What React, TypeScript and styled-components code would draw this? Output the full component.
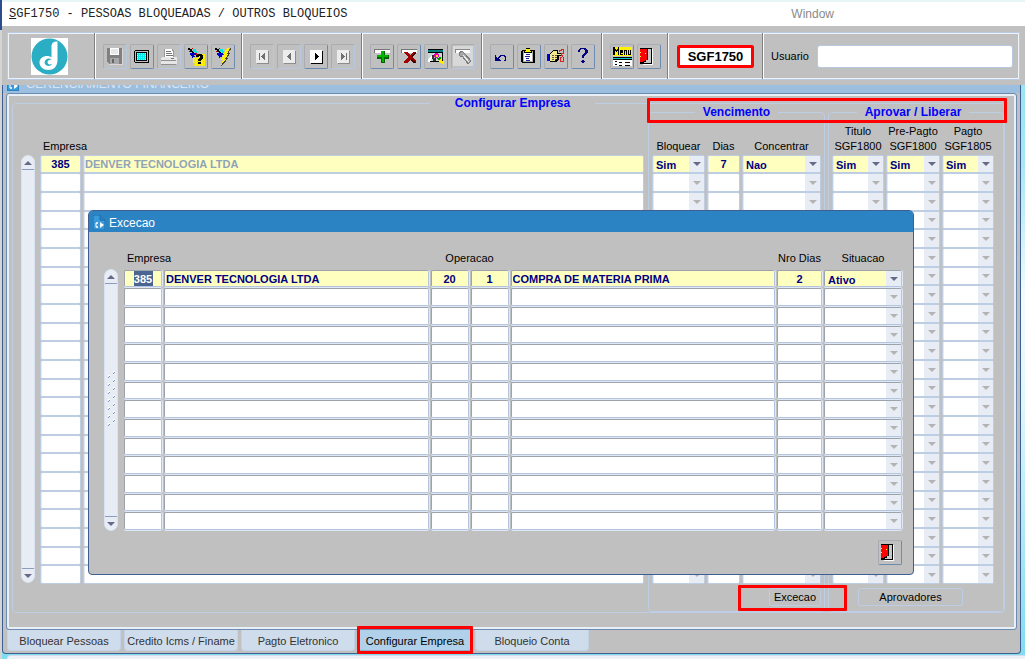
import React, { useState } from "react";
import styled, { createGlobalStyle, css } from "styled-components";

const GlobalStyle = createGlobalStyle`
  * { box-sizing: border-box; }
  html, body { margin: 0; padding: 0; }
  body {
    font-family: "Liberation Sans", Arial, sans-serif;
    font-size: 11px;
    color: #000;
    background: #a9e6f0;
  }
  button, input, select { font: inherit; color: inherit; margin: 0; padding: 0; }
`;

const gray = "#c0c0c0";
const lineBlue = "#bccde4";
const navy = "#000080";
const yellow = "#ffffc0";
const red = "#ff0000";

/* ---------- frame ---------- */

const Page = styled.div`
  display: flex;
  flex-direction: column;
  min-height: 100vh;
  overflow: hidden;
  background:
    linear-gradient(180deg, #2a4d8f 0 30px, #d4d4d4 30px) 0 0 / 2px 100% no-repeat,
    linear-gradient(180deg, #8fe0f0 0%, #a6e8f2 25%, #f2fbfd 45%, #e2f8fb 60%, #7fdcee 100%);
`;

const MenuBar = styled.header`
  display: flex;
  align-items: center;
  justify-content: space-between;
  height: 26px;
  margin-left: 2px;
  padding: 0 191px 0 7px;
  border-top: 2px solid #e6f6f6;
  background: #fff;
`;

const ProgramTitle = styled.h1`
  margin: 0;
  font: 12px/14px "Liberation Mono", "Courier New", monospace;
  color: #222;
  &::first-letter { text-decoration: underline; }
`;

const MenuLink = styled.a`
  font-size: 12px;
  line-height: 14px;
  color: #8a8a8a;
  text-decoration: none;
`;

const ToolbarArea = styled.div`
  padding: 6px 5px 5px;
  margin-left: 2px;
  background: ${gray};
`;

const Toolbar = styled.div`
  display: flex;
  height: 48px;
  border: 1px solid #b9cbe4;
  box-shadow: inset 0 0 0 1px #eef3fa;
`;

const Group = styled.div<{ $last?: boolean }>`
  display: flex;
  align-items: center;
  gap: 3px;
  padding: 0 6px 0 7px;
  ${(p) => (p.$last ? "flex: 1; gap: 8px;" : "border-right: 1px solid #808080;")}
  border-left: 1px solid #fff;
`;

const LogoCell = styled(Group)`
  width: 87px;
  justify-content: center;
  padding: 0 4px 0 0;
  border-left: 0;
`;

const ToolButton = styled.button`
  display: flex;
  width: 24px;
  height: 25px;
  background: ${gray};
  border: 1px solid;
  border-color: #a9adb3 #6d8bb1 #6d8bb1 #a9adb3;
  border-radius: 2px;
  &:disabled { border-color: #aaacb0 #b7c8e0 #b7c8e0 #aaacb0; }
`;

const ProgramCode = styled.output`
  width: 77px;
  margin: 0 2px 0 1px;
  padding: 0;
  border: 3px solid ${red};
  border-radius: 2px;
  background: #fff;
  font-size: 13px;
  font-weight: bold;
  line-height: 17px;
  text-align: center;
`;

const UserInput = styled.input`
  flex: 1;
  min-width: 0;
  height: 23px;
  background: #fff;
  border: 1px solid #b7c8e0;
  border-radius: 3px;
`;

/* ---------- windows ---------- */

const MainWindow = styled.main`
  position: relative;
  margin: 0 4px 0 2px;
  padding: 0 3px 2px;
  background: ${gray};
  border: solid #3f5f92;
  border-width: 0 1px 1px;
  border-radius: 0 0 4px 4px;
`;

const ClippedTitle = styled.div`
  display: flex;
  align-items: flex-end;
  gap: 7px;
  height: 8px;
  margin: 0 -3px;
  padding: 0 4px 2px;
  overflow: hidden;
  background: #9cbfdf;
  color: #d7e5f3;
  font-size: 12px;
  line-height: 14px;
`;

const TabPanel = styled.section`
  padding: 5px 11px 16px 5px;
  border: 1px solid #6d8bb1;
  border-radius: 3px;
  box-shadow: inset 0 0 0 2px #e9eff7;
`;

const groupBox = css`
  min-width: 0;
  margin: 0;
  border: 1px solid ${lineBlue};
  border-radius: 4px;
`;

const Legend = styled.legend<{ $gap: number }>`
  margin: 0 auto;
  padding: 0 ${(p) => p.$gap}px;
  font-size: 12px;
  font-weight: bold;
  line-height: 8px;
  color: #0000ff;
`;

const OuterGroup = styled.fieldset`
  ${groupBox}
  padding: 1px 0 0 8px;
`;

const SubGroup = styled.fieldset<{ $w: number; $right: number }>`
  ${groupBox}
  flex: none;
  width: ${(p) => p.$w}px;
  padding: 0 ${(p) => p.$right}px 5px 2px;
  margin-left: 3px;
`;

const Body = styled.div`
  display: flex;
  width: 100%;
`;

const CompanyArea = styled.div`
  display: flex;
  flex: 1;
  gap: 4px;
  min-width: 0;
  padding-top: 8px;
  align-items: flex-start;
`;

const BarColumn = styled.div<{ $top: number }>`
  display: flex;
  flex: none;
  padding-top: ${(p) => p.$top}px;
`;

const Bar = styled.div<{ $h: number }>`
  display: flex;
  flex-direction: column;
  justify-content: space-between;
  width: 14px;
  height: ${(p) => p.$h}px;
  background: #e8edf5;
  border: 1px solid #d9e2ef;
  border-radius: 7px;
`;

const BarButton = styled.button<{ $down?: boolean }>`
  display: flex;
  align-items: center;
  justify-content: center;
  height: 14px;
  background: transparent;
  border: 0 solid #8b9dbb;
  border-width: ${(p) => (p.$down ? "1px 0 0" : "0 0 1px")};
`;

/* ---------- grids ---------- */

const Grid = styled.table<{ $head: number; $lift?: number }>`
  width: 100%;
  table-layout: fixed;
  border-collapse: separate;
  border-spacing: 0;
  thead tr { height: ${(p) => p.$head}px; }
  th { padding-bottom: ${(p) => p.$lift ?? 1}px; }
  tbody tr { height: 19px; }
  tbody tr:nth-child(3n + 1) { height: 18px; }
`;

const Th = styled.th<{ $left?: boolean }>`
  padding: 0 ${(p) => (p.$left ? 4 : 0)}px;
  font-weight: normal;
  line-height: 15px;
  vertical-align: bottom;
  white-space: nowrap;
  text-align: ${(p) => (p.$left ? "left" : "center")};
`;

const Td = styled.td`
  height: inherit;
  padding: 0 1px;
  vertical-align: top;
`;

type Look = { $active?: boolean; $dialog?: boolean; $muted?: boolean; $center?: boolean };

const box = css<Look>`
  width: 100%;
  height: 100%;
  background: ${(p) => (p.$active ? yellow : "#fff")};
  border: 1px solid ${lineBlue};
  border-radius: 2px;
  ${(p) =>
    p.$dialog
      ? "border-color: #9ea3ab #b4c6df #b4c6df #9ea3ab; box-shadow: 0 1px 0 #dfe8f4, 1px 0 0 #dfe8f4; height: calc(100% - 1px);"
      : "box-shadow: inset 1px 0 0 #e3eaf4;"}
  color: ${(p) => (p.$muted ? "#8fa3b8" : navy)};
  font-weight: bold;
`;

const Field = styled.input<Look>`
  ${box}
  display: block;
  padding: 0 1px;
  text-align: ${(p) => (p.$center ? "center" : "left")};
`;

const FieldFrame = styled.div<Look>`
  ${box}
  display: flex;
  align-items: center;
  justify-content: center;
`;

const SelectedField = styled.input`
  width: 19px;
  height: 15px;
  border: 0;
  background: #4a6591;
  color: #fff;
  font-weight: bold;
  text-align: center;
`;

const ComboFrame = styled.div<Look>`
  ${box}
  display: flex;
`;

const ComboSelect = styled.select`
  flex: 1;
  min-width: 0;
  height: 100%;
  padding: 2px 0 0 3px;
  appearance: none;
  background: transparent;
  border: 0;
  font-weight: bold;
`;

const ComboArrow = styled.span`
  display: flex;
  flex: none;
  align-items: center;
  justify-content: center;
  width: 15px;
  background: #e8edf5;
`;

/* ---------- buttons, tabs, highlights ---------- */

const ButtonRow = styled.div<{ $left: number }>`
  display: flex;
  padding: 4px 0 0 ${(p) => p.$left}px;
`;

const TextButton = styled.button<{ $w: number }>`
  width: ${(p) => p.$w}px;
  height: 18px;
  background: ${gray};
  border: 1px solid ${lineBlue};
  border-radius: 2px;
`;

const Highlight = styled.span`
  position: absolute;
  border: 3px solid ${red};
  border-radius: 1px;
  pointer-events: none;
`;

const HeadHighlight = styled(Highlight)`
  top: 13px;
  right: 13px;
  width: 360px;
  height: 25px;
`;

const ButtonHighlight = styled(Highlight)`
  bottom: 42px;
  right: 173px;
  width: 109px;
  height: 26px;
`;

const Tabs = styled.nav`
  display: flex;
  gap: 3px;
  padding-left: 1px;
`;

const Tab = styled.button<{ $active?: boolean }>`
  position: relative;
  width: 114px;
  height: 21px;
  padding-top: 1px;
  white-space: nowrap;
  background: ${(p) => (p.$active ? "#b1d0ea" : "#cfdcec")};
  color: ${(p) => (p.$active ? "#000" : "#333")};
  border: 1px solid ${(p) => (p.$active ? "#8fa9cb" : "#c3d2e6")};
  border-top: 0;
  border-radius: 0 0 4px 4px;
`;

const TabHighlight = styled(Highlight)`
  inset: -4px -2px -4px -2px;
`;

const Dialog = styled.section`
  position: absolute;
  top: 125px;
  left: 85px;
  right: 106px;
  background: ${gray};
  border: 1px solid #3f5f92;
  border-radius: 5px 5px 4px 4px;
  overflow: hidden;
`;

const DialogTitle = styled.h2`
  display: flex;
  align-items: center;
  gap: 4px;
  height: 21px;
  margin: 0;
  padding: 2px 0 0 4px;
  background: #2c83c3;
  color: #fff;
  font-size: 12px;
  font-weight: normal;
`;

const DialogBody = styled.div`
  display: flex;
  gap: 5px;
  padding: 0 10px 0 15px;
`;

const DialogFooter = styled.div`
  display: flex;
  justify-content: flex-end;
  padding: 9px 11px 9px;
`;

const StatusArea = styled.footer`
  flex: 1;
  min-height: 4px;
  margin: 1px 0 0 7px;
  background: #eef2f8;
  border-top: 1px solid #d3dcea;
  border-radius: 6px 0 0 0;
`;

/* ---------- drawings ---------- */

const Svg = ({ children }: { children: React.ReactNode }) => (
  <svg width="22" height="22" viewBox="0 0 22 22" shapeRendering="crispEdges" aria-hidden="true">
    {children}
  </svg>
);

const Triangle = ({ up, color }: { up?: boolean; color: string }) => (
  <svg width="8" height="4" viewBox="0 0 8 4" aria-hidden="true">
    <path d={up ? "M0 4L4 0L8 4Z" : "M0 0H8L4 4Z"} fill={color} />
  </svg>
);

const Logo = () => (
  <svg width="37" height="37" viewBox="0 0 37 37" role="img" aria-label="Logo">
    <rect width="37" height="37" fill="#fff" />
    <circle cx="18.500" cy="18.500" r="18" fill="#2badc3" />
    <path
      d="M20.500 7.500C21 4.500 23.500 3 26.500 3.500V22C26.500 29 22 32 17.500 32C12 32 8.500 28.500 8.500 24.500C8.500 20.500 12 18 16 18C18 18 19.500 18.500 20.500 19.500Z"
      fill="#fff"
    />
    <path d="M21 21.500C18 19.500 14 21 13.500 24.500C14 28.500 19.500 29 21 26C18 27 16.500 26 16.500 24C17 22 19 21.500 21 21.500Z" fill="#2badc3" />
  </svg>
);

const SaveIcon = () => (
  <Svg>
    <path d="M3 3H18V19H5L3 17Z" fill="#808080" />
    <path d="M6 3H15V10H6Z" fill="#fff" />
    <path d="M7 4H14V9H7Z" fill="#e8e8e8" />
    <path d="M6 13H15V19H6Z" fill="#a8a8a8" />
    <path d="M8 14H10V18H8Z" fill="#666" />
    <path d="M18 4H19V20H5V19H18Z" fill="#d8d8d8" />
  </Svg>
);

const ScreenIcon = () => (
  <Svg>
    <path d="M4 5H17L18 6V17L17 18H4L3 17V6Z" fill="#000" />
    <path d="M4 6H17V17H4Z" fill="#c0c0c0" />
    <path d="M5 7H16V16H5Z" fill="#000" />
    <path d="M6 8H15V15H6Z" fill="#00f0f0" />
    {[8, 10, 12, 14].map((y) => (
      <path key={y} d={`M6 ${y}.5H15`} stroke="#bff" strokeDasharray="1 1" />
    ))}
  </Svg>
);

const PrinterIcon = () => (
  <Svg>
    <path d="M6 4H14L16 6V12H6Z" fill="#fff" />
    <path d="M8 6.500H13M8 8.500H14M8 10.500H15" stroke="#777" />
    <path d="M6.500 4V12M14 4.500L15.500 6V12" stroke="#999" fill="none" />
    <path d="M4 12H18L19 13V19H3V13Z" fill="#e6e6e6" />
    <path d="M3 15.500H18M3 19.500H18" stroke="#909090" />
    <path d="M13 13.500H16" stroke="#777" />
  </Svg>
);

const Torch = () => (
  <>
    <path d="M3 3H5V4H7V6H9V8H7V7H5V5H3Z" fill="#000" />
    <path d="M8 4H11V6H12V8H10V7H8Z" fill="#00e5e5" />
    <path d="M5 8H11V10H10V12H8V13H7V11H6V10H5Z" fill="#0000c8" />
    <path d="M7 3H8V4H7ZM11 8H12V10H11ZM4 6H5V7H4Z" fill="#e00000" />
  </>
);

const QueryIcon = () => (
  <Svg>
    <Torch />
    <path d="M8 13H12V9H20V21H9V18H8Z" fill="#fff200" />
    {[10, 12, 14, 16, 18, 20].map((y) => (
      <path key={y} d={`M9 ${y}.5H20`} stroke="#d0c870" strokeDasharray="1 2" />
    ))}
    <path d="M11 12V10H12V9H17V10H18V14H17V15H16V16H13V14H14V13H15V11H14V12ZM13 17H16V19H13Z" fill="#000" />
  </Svg>
);

const RunIcon = () => (
  <Svg>
    <Torch />
    <path d="M15 3H19L16 8H18L14 13H16L9 21L11 15H9L12 9H11Z" fill="#ffef00" />
    <path d="M19 3L16 8H18L14 13H16L9 21" stroke="#444" fill="none" />
  </Svg>
);

const NavIcon = ({ d, off }: { d: string; off?: boolean }) => (
  <Svg>
    <rect x="6" y="6" width="12" height="13" fill={off ? "#8c8c8c" : "#000"} />
    <rect x="5" y="5" width="12" height="13" fill={off ? "#ececec" : "#fff"} />
    <path d={d} fill={off ? "#707070" : "#000"} />
  </Svg>
);

const AddIcon = () => (
  <Svg>
    <path d="M3 4H19V8H3Z" fill="#fff" />
    <path d="M3 4H19V5H4V8H3Z" fill="#777" />
    <path d="M10 6H14V10H18V14H14V18H10V14H6V10H10Z" fill="#006400" />
    <path d="M10 6H13V10H17V12H13V17H11V12H6V10H10Z" fill="#00b400" />
  </Svg>
);

const DeleteIcon = () => (
  <Svg>
    <path d="M3 4H19V8H3Z" fill="#fff" />
    <path d="M3 4H19V5H4V8H3Z" fill="#777" />
    <path d="M6 7H9L12 10L15 7H18V8L14 12L18 16V18H15L12 15L9 18H6V16L10 12L6 8Z" fill="#a00000" />
    <path d="M18 7V8L14 12L13 11ZM15 18L12 15L13 14L18 17V18Z" fill="#400000" />
  </Svg>
);

const LockIcon = () => (
  <Svg>
    <path d="M4 5H18V17H4Z" fill="#000" />
    <path d="M3 4H17V16H3Z" fill="#c8d8d8" />
    <path d="M3 4H18V5H3Z" fill="#000" />
    <path d="M3 5H18V7H3Z" fill="#008080" />
    <path d="M3 7H17V8H3Z" fill="#000" />
    <path d="M3 17V14L8 9V12L5 17Z" fill="#fff" />
    <path d="M7 10H9V13H11V16H8V14H7Z" fill="#333" />
    <path d="M10 8H13V9H14V12H13V13H10V12H9V9H10Z" fill="#e000b0" />
    <path d="M11 10H13V12H11Z" fill="#ffe000" />
    <path d="M12 13H14V12H16V15H13V14H12Z" fill="#009000" />
    <path d="M15 14H17V16H19V19H17V18H15V17H14V15H15Z" fill="#ffee00" />
  </Svg>
);

const TorchOffIcon = () => (
  <Svg>
    <rect x="1" y="1" width="20" height="20" fill="#d8d8d8" />
    <path d="M3 4H18V8H3Z" fill="#fff" />
    <path d="M3 4H18V5H4V8H3Z" fill="#888" />
    <path d="M7 8L10 6L13 9L19 16L16 19L11 12L8 11Z" fill="#a8a8a8" stroke="#7a7a7a" />
    <path d="M11 10L17 17" stroke="#eee" />
  </Svg>
);

const UndoIcon = () => (
  <Svg>
    <path d="M4 10H5V12H6V13H8V14H9V15H10V16H4Z" fill={navy} />
    <path d="M7 12.500H8.500V11.500H9.500V10.500H13.500V11.500H14.500V15.500H13" stroke={navy} fill="none" />
  </Svg>
);

const ClipboardIcon = () => (
  <Svg>
    <path d="M4 5H16L17 6V17L16 18H4L3 17V6Z" fill="#000" />
    <path d="M5 6H15V17H5Z" fill="#b0b0b0" />
    <path d="M6 8H14V16H6Z" fill="#fff" />
    <path d="M8 3H12V5H14V8H6V5H8Z" fill="#000" />
    <path d="M8 4H12V6H13V7H7V6H8Z" fill="#fff200" />
    <path d="M8 9.500H12M7 11.500H12M8 13.500H11M8 15.500H12" stroke="#2020a0" />
  </Svg>
);

const HandIcon = () => (
  <Svg>
    <path d="M2 9H4V16H2Z" fill="#0000e0" />
    <path d="M4 9L8 5H13V8H17V11H14V14L12 17H5L4 16Z" fill="#000" />
    <path d="M5 9L8 6H12V9H16V10H12V13L10 16H5Z" fill="#f4e68a" />
    <path d="M7 10.500H12M7 12.500H12M7 14.500H11" stroke="#555" strokeDasharray="2 1" />
    <path d="M14.500 7V5.500H16.500V4.500H18.500V8.500H16.500V10L18.500 12.500V16.500H15.500V12.500H17" stroke="#e02020" fill="none" />
  </Svg>
);

const HelpIcon = () => (
  <Svg>
    <path d="M6 5H7V4H8V3H14V4H15V5H16V8H15V9H14V10H13V11H12V13H10V10H11V9H12V8H13V5H12V4H9V5H8V7H6Z" fill={navy} />
    <path d="M10 15H12V16H13V17H12V18H10V17H9V16H10Z" fill={navy} />
  </Svg>
);

const MenuIcon = () => (
  <Svg>
    <rect x="2" y="2" width="19" height="9" fill="#fff200" />
    <path d="M2 10V2H4V4H5V5H6V4H7V2H8V10H7V6H6V7H5V6H4V10ZM9 5H12V8H10V9H12V10H9ZM13 5H16V10H15V6H14V10H13ZM17 5H18V9H19V5H20V10H17Z" fill="#000" />
    <rect x="2" y="12" width="19" height="9" fill="#fff" />
    <rect x="2" y="12" width="19" height="1" fill="#000" />
    <rect x="2" y="13" width="19" height="1" fill="#00c8c8" />
    <path d="M2 14.500H21M4 16.500H6M8 17.500H11M14 17.500H19M4 19.500H6M8 20.500H11M14 20.500H19" stroke="#000" />
  </Svg>
);

const DoorIcon = () => (
  <Svg>
    <path d="M2 3H14V19H2Z" fill="#000" />
    <path d="M14 4H15V20H5V19H14Z" fill="#fff" />
    <path d="M3 4H13V18H3Z" fill="#c8c8c8" />
    <path d="M2 4H9V15H7V16H5V17H2Z" fill="#ff0000" />
    <path d="M9 4H10V15H8V17H6V18H3V17H5V16H7V15H9Z" fill="#000" />
    <path d="M2 7H3V8H2ZM2 11H3V12H2ZM7 8H8V9H7Z" fill="#ffff00" />
  </Svg>
);

const WindowIcon = () => (
  <svg width="12" height="15" viewBox="0 0 12 15" aria-hidden="true">
    <path d="M0 0H7L12 5V15H0Z" fill="#3a9bdc" stroke="#1c6aa6" />
    <path d="M7 0V5H12" fill="#2c83c3" stroke="#1c6aa6" />
    <path d="M5 8H3V12H5M4 7V9M4 11V13" stroke="#fff" fill="none" />
    <path d="M7 7L11 10L7 13Z" fill="#fff" />
  </svg>
);

/* ---------- parts ---------- */

type ComboProps = { value?: string; label: string; dialog?: boolean };

const Combo = ({ value, label, dialog }: ComboProps) => (
  <ComboFrame $active={!!value} $dialog={dialog}>
    <ComboSelect aria-label={label} defaultValue={value ?? ""}>
      <option>{value ?? ""}</option>
    </ComboSelect>
    <ComboArrow>
      <Triangle color={value ? "#666a88" : "#b3b3b3"} />
    </ComboArrow>
  </ComboFrame>
);

const ScrollBar = ({ height, top, grip }: { height: number; top: number; grip?: boolean }) => (
  <BarColumn $top={top}>
    <Bar $h={height}>
      <BarButton aria-label="Acima">
        <Triangle up color="#666a88" />
      </BarButton>
      {grip && (
        <svg width="12" height="60" viewBox="0 0 12 60" shapeRendering="crispEdges" aria-hidden="true">
          {Array.from({ length: 14 }, (_, i) => (
            <g key={i} transform={`translate(${i % 2 ? 3 : 8} ${i * 4 + 1})`}>
              <rect width="2" height="1" fill="#fff" />
              <rect x="1" y="1" width="1" height="1" fill="#7f9cc0" />
              <rect x="0" y="2" width="1" height="1" fill="#7f9cc0" />
            </g>
          ))}
        </svg>
      )}
      <BarButton $down aria-label="Abaixo">
        <Triangle color="#666a88" />
      </BarButton>
    </Bar>
  </BarColumn>
);

const rows = (n: number) => Array.from({ length: n }, (_, i) => i);

const tools = {
  file: [
    { name: "Salvar", icon: <SaveIcon />, off: true },
    { name: "Tela", icon: <ScreenIcon /> },
    { name: "Imprimir", icon: <PrinterIcon />, off: true },
    { name: "Consultar", icon: <QueryIcon /> },
    { name: "Executar consulta", icon: <RunIcon /> },
  ],
  nav: [
    { name: "Primeiro", icon: <NavIcon off d="M8 8H9V15H8ZM14 8V15L10 12V11Z" />, off: true },
    { name: "Anterior", icon: <NavIcon off d="M13 8V15L9 12V11Z" />, off: true },
    { name: "Proximo", icon: <NavIcon d="M10 8V15L14 12V11Z" /> },
    { name: "Ultimo", icon: <NavIcon off d="M14 8H15V15H14ZM9 8V15L13 12V11Z" />, off: true },
  ],
  record: [
    { name: "Inserir", icon: <AddIcon /> },
    { name: "Excluir", icon: <DeleteIcon /> },
    { name: "Travar", icon: <LockIcon /> },
    { name: "Lista", icon: <TorchOffIcon />, off: true },
  ],
  edit: [
    { name: "Desfazer", icon: <UndoIcon /> },
    { name: "Editar", icon: <ClipboardIcon /> },
    { name: "Recortar", icon: <HandIcon /> },
    { name: "Ajuda", icon: <HelpIcon /> },
  ],
  exit: [
    { name: "Menu", icon: <MenuIcon /> },
    { name: "Sair", icon: <DoorIcon /> },
  ],
};

const tabNames = ["Bloquear Pessoas", "Credito Icms / Finame", "Pagto Eletronico", "Configurar Empresa", "Bloqueio Conta"];

const ExceptionDialog = () => (
  <Dialog role="dialog" aria-label="Excecao">
    <DialogTitle>
      <WindowIcon />
      Excecao
    </DialogTitle>
    <DialogBody>
      <ScrollBar height={262} top={37} grip />
      <Grid $head={38} $lift={4}>
        <colgroup>
          <col width="40" />
          <col />
          <col width="40" />
          <col width="40" />
          <col />
          <col width="47" />
          <col width="80" />
        </colgroup>
        <thead>
          <tr>
            <Th $left>Empresa</Th>
            <Th />
            <Th colSpan={2}>Operacao</Th>
            <Th />
            <Th>Nro Dias</Th>
            <Th>Situacao</Th>
          </tr>
        </thead>
        <tbody>
          {rows(14).map((i) => {
            const on = i === 0;
            const look = { $dialog: true, $active: on };
            return (
              <tr key={i}>
                <Td>
                  {on ? (
                    <FieldFrame {...look}>
                      <SelectedField aria-label="Empresa" defaultValue="385" />
                    </FieldFrame>
                  ) : (
                    <Field {...look} aria-label="Empresa" />
                  )}
                </Td>
                <Td><Field {...look} aria-label="Nome da empresa" defaultValue={on ? "DENVER TECNOLOGIA LTDA" : ""} /></Td>
                <Td><Field {...look} $center aria-label="Operacao" defaultValue={on ? "20" : ""} /></Td>
                <Td><Field {...look} $center aria-label="Sequencia" defaultValue={on ? "1" : ""} /></Td>
                <Td><Field {...look} aria-label="Descricao" defaultValue={on ? "COMPRA DE MATERIA PRIMA" : ""} /></Td>
                <Td><Field {...look} $center aria-label="Nro Dias" defaultValue={on ? "2" : ""} /></Td>
                <Td><Combo dialog label="Situacao" value={on ? "Ativo" : undefined} /></Td>
              </tr>
            );
          })}
        </tbody>
      </Grid>
    </DialogBody>
    <DialogFooter>
      <ToolButton aria-label="Fechar"><DoorIcon /></ToolButton>
    </DialogFooter>
  </Dialog>
);

export default function App() {
  const [tab, setTab] = useState(3);
  return (
    <Page>
      <GlobalStyle />
      <MenuBar>
        <ProgramTitle>SGF1750 - PESSOAS BLOQUEADAS / OUTROS BLOQUEIOS</ProgramTitle>
        <MenuLink href="#window">Window</MenuLink>
      </MenuBar>
      <ToolbarArea>
        <Toolbar>
          <LogoCell><Logo /></LogoCell>
          {Object.entries(tools).map(([group, items]) => (
            <Group key={group}>
              {items.map((t: { name: string; icon: React.ReactNode; off?: boolean }) => (
                <ToolButton key={t.name} aria-label={t.name} disabled={t.off}>{t.icon}</ToolButton>
              ))}
            </Group>
          ))}
          <Group><ProgramCode>SGF1750</ProgramCode></Group>
          <Group $last>
            <label htmlFor="usuario">Usuario</label>
            <UserInput id="usuario" />
          </Group>
        </Toolbar>
      </ToolbarArea>

      <MainWindow>
        <ClippedTitle>
          <WindowIcon />
          GERENCIAMENTO FINANCEIRO
        </ClippedTitle>
        <TabPanel>
          <OuterGroup>
            <Legend $gap={25}>Configurar Empresa</Legend>
            <Body>
              <CompanyArea>
                <ScrollBar height={428} top={39} />
                <Grid $head={39}>
                  <colgroup>
                    <col width="43" />
                    <col />
                  </colgroup>
                  <thead>
                    <tr>
                      <Th $left>Empresa</Th>
                      <Th />
                    </tr>
                  </thead>
                  <tbody>
                    {rows(23).map((i) => (
                      <tr key={i}>
                        <Td><Field $center $active={i === 0} aria-label="Empresa" defaultValue={i ? "" : "385"} /></Td>
                        <Td><Field $muted $active={i === 0} aria-label="Nome" defaultValue={i ? "" : "DENVER TECNOLOGIA LTDA"} /></Td>
                      </tr>
                    ))}
                  </tbody>
                </Grid>
              </CompanyArea>

              <SubGroup $w={177} $right={2}>
                <Legend $gap={8}>Vencimento</Legend>
                <Grid $head={39}>
                  <colgroup>
                    <col width="55" />
                    <col width="35" />
                    <col width="81" />
                  </colgroup>
                  <thead>
                    <tr>
                      <Th>Bloquear</Th>
                      <Th>Dias</Th>
                      <Th>Concentrar</Th>
                    </tr>
                  </thead>
                  <tbody>
                    {rows(23).map((i) => (
                      <tr key={i}>
                        <Td><Combo label="Bloquear" value={i ? undefined : "Sim"} /></Td>
                        <Td><Field $center $active={i === 0} aria-label="Dias" defaultValue={i ? "" : "7"} /></Td>
                        <Td><Combo label="Concentrar" value={i ? undefined : "Nao"} /></Td>
                      </tr>
                    ))}
                  </tbody>
                </Grid>
                <ButtonRow $left={118}>
                  <TextButton $w={52}>Excecao</TextButton>
                </ButtonRow>
              </SubGroup>

              <SubGroup $w={176} $right={8}>
                <Legend $gap={8}>Aprovar / Liberar</Legend>
                <Grid $head={39}>
                  <colgroup>
                    <col width="54" />
                    <col width="56" />
                    <col width="54" />
                  </colgroup>
                  <thead>
                    <tr>
                      <Th>Titulo<br />SGF1800</Th>
                      <Th>Pre-Pagto<br />SGF1800</Th>
                      <Th>Pagto<br />SGF1805</Th>
                    </tr>
                  </thead>
                  <tbody>
                    {rows(23).map((i) => (
                      <tr key={i}>
                        {["Titulo", "Pre-Pagto", "Pagto"].map((c) => (
                          <Td key={c}><Combo label={c} value={i ? undefined : "Sim"} /></Td>
                        ))}
                      </tr>
                    ))}
                  </tbody>
                </Grid>
                <ButtonRow $left={27}>
                  <TextButton $w={105}>Aprovadores</TextButton>
                </ButtonRow>
              </SubGroup>
            </Body>
          </OuterGroup>
        </TabPanel>
        <Tabs>
          {tabNames.map((name, i) => (
            <Tab key={name} $active={i === tab} onClick={() => setTab(i)}>
              {name}
              {i === tab && <TabHighlight />}
            </Tab>
          ))}
        </Tabs>
        <HeadHighlight />
        <ButtonHighlight />
        <ExceptionDialog />
      </MainWindow>
      <StatusArea />
    </Page>
  );
}
